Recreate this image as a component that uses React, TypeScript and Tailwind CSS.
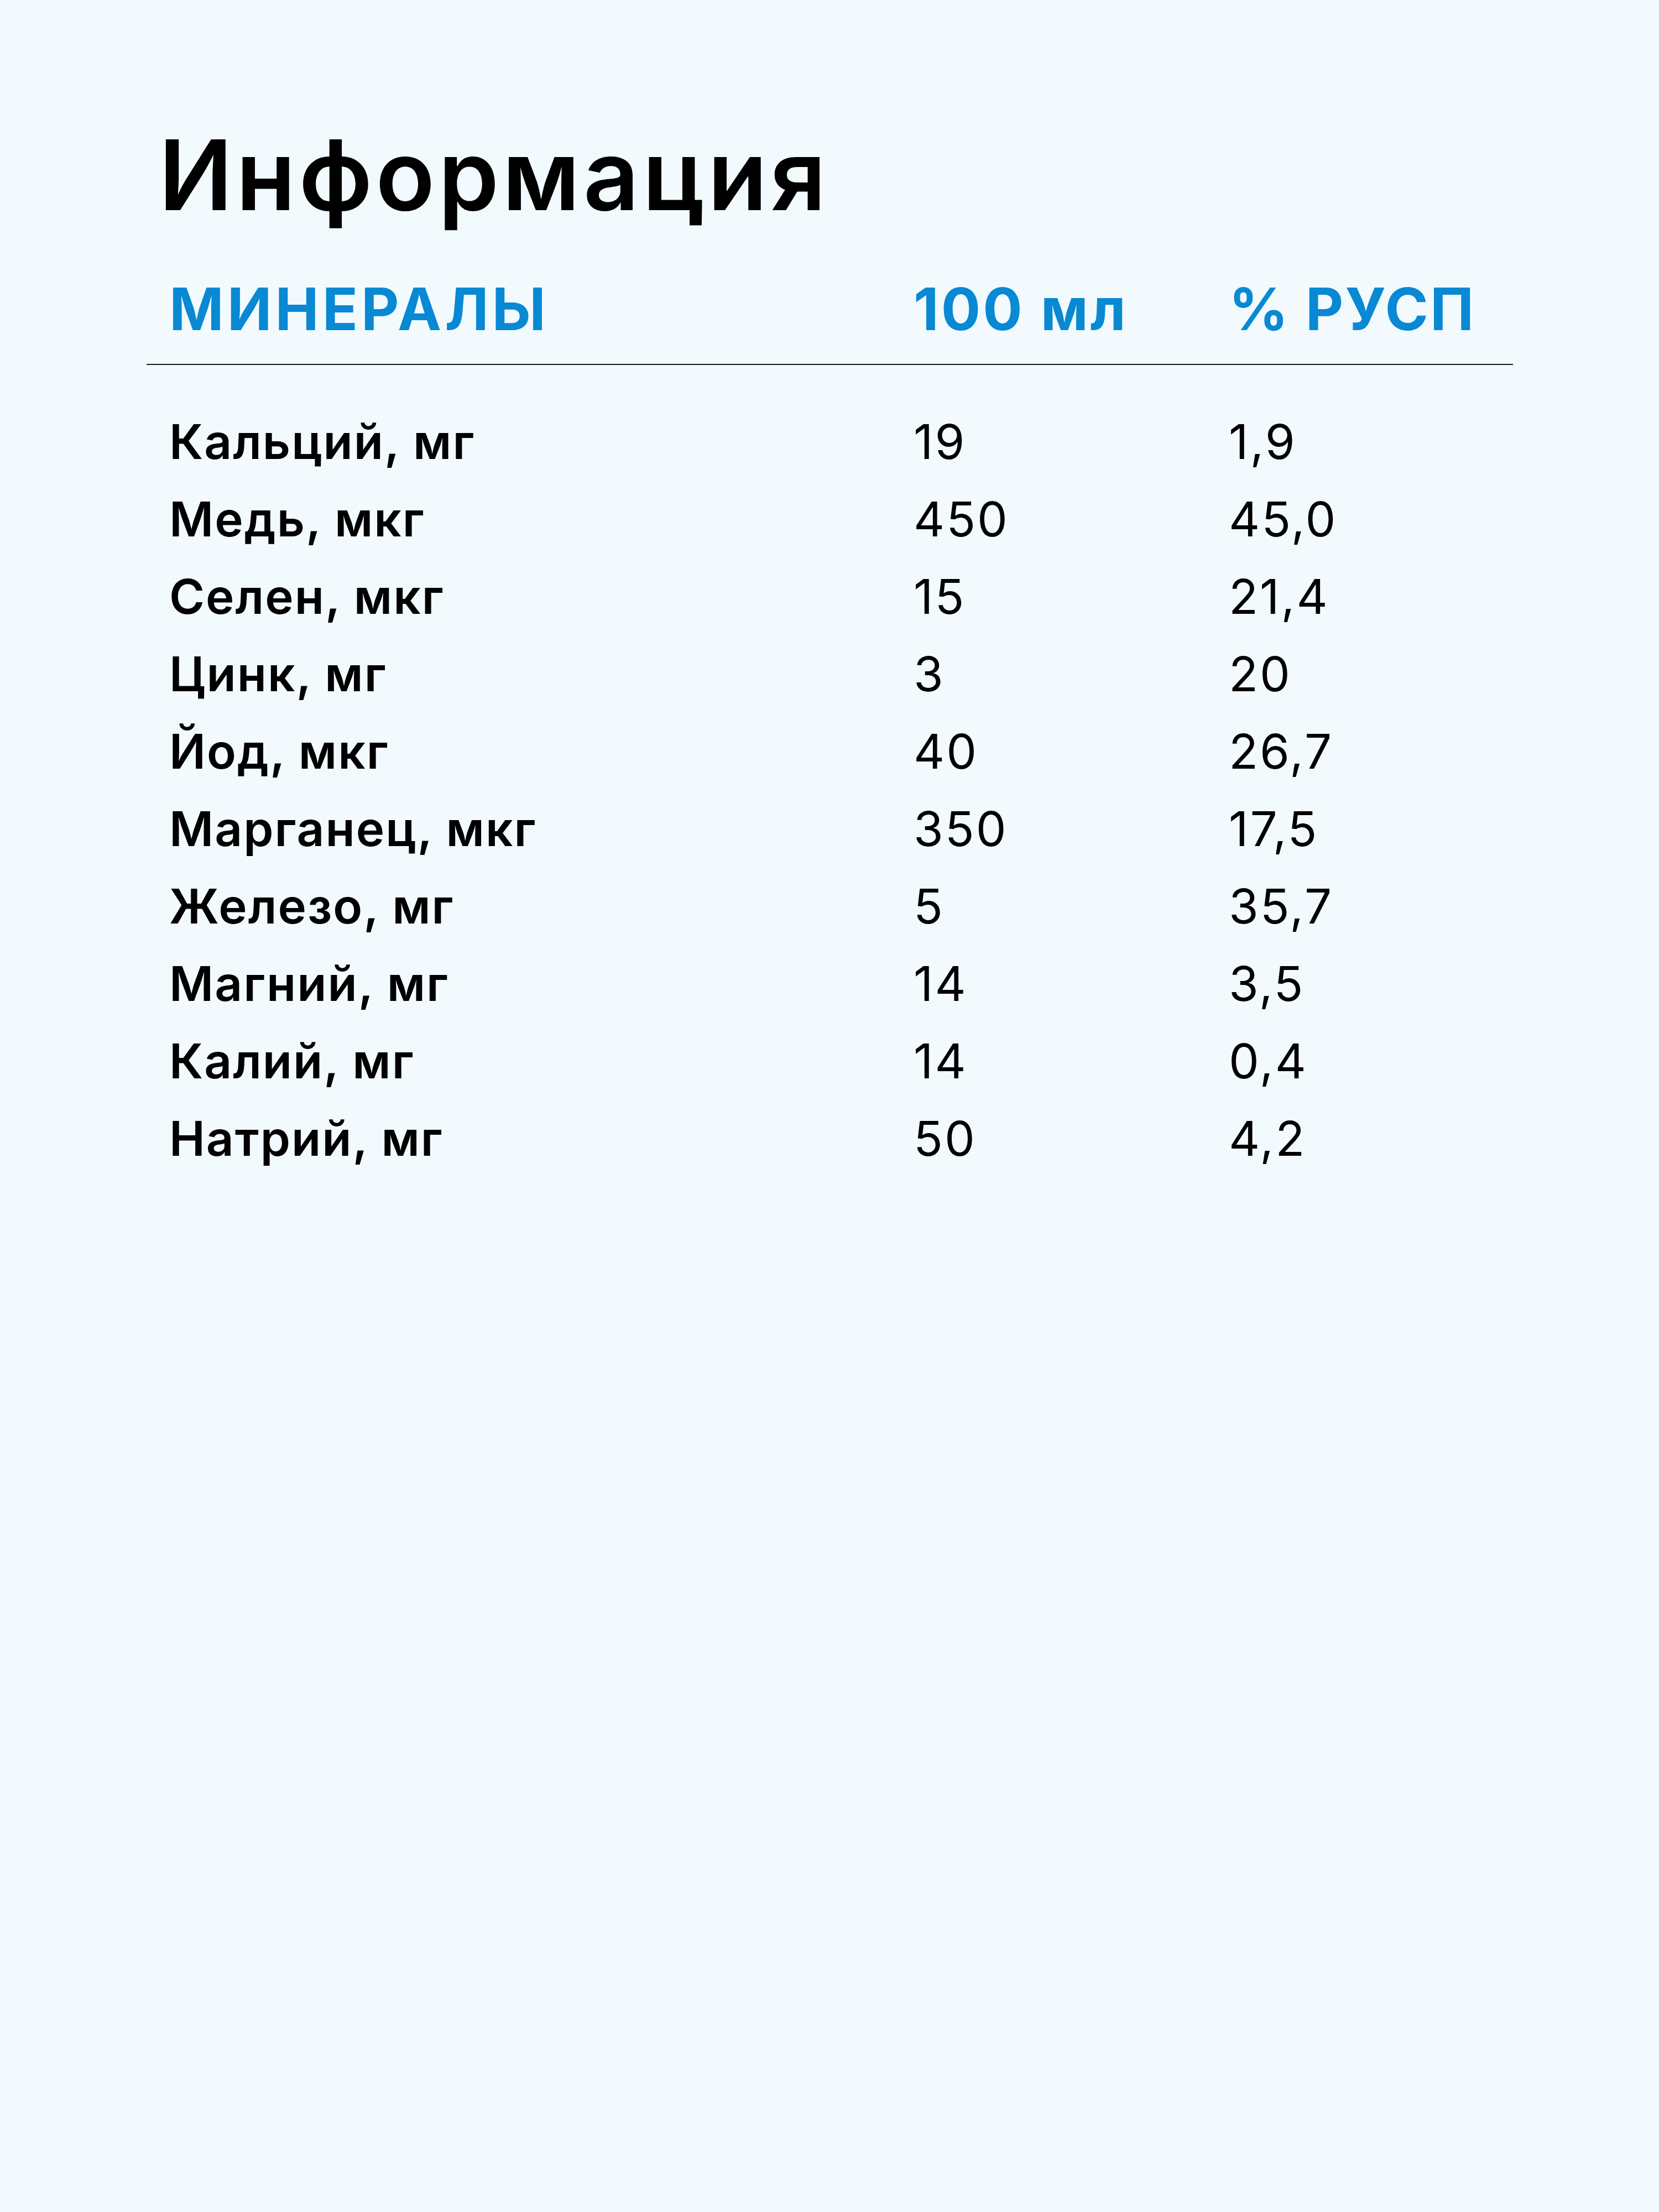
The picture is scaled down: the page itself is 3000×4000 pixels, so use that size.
import React from 'react';

/* Данные таблицы минералов */
const minerals = [
  { name: 'Кальций, мг', amount: '19', rda: '1,9' },
  { name: 'Медь, мкг', amount: '450', rda: '45,0' },
  { name: 'Селен, мкг', amount: '15', rda: '21,4' },
  { name: 'Цинк, мг', amount: '3', rda: '20' },
  { name: 'Йод, мкг', amount: '40', rda: '26,7' },
  { name: 'Марганец, мкг', amount: '350', rda: '17,5' },
  { name: 'Железо, мг', amount: '5', rda: '35,7' },
  { name: 'Магний, мг', amount: '14', rda: '3,5' },
  { name: 'Калий, мг', amount: '14', rda: '0,4' },
  { name: 'Натрий, мг', amount: '50', rda: '4,2' },
];

const App = () => (
  <div className="w-[3000px] min-h-[4000px] bg-[#f2fafe] font-['Inter',sans-serif] text-black">
    <div className="ml-[265px] w-[2471px] pt-[228px]">
      <h1 className="pl-[22px] text-[176px] leading-none font-semibold tracking-[6px]">Информация</h1>

      {/* Заголовок таблицы */}
      <div className="mt-[102px] pb-[46px] border-b-2 border-[#1a1a1a] grid grid-cols-[1346px_570px_1fr] pl-[41px] text-[106px] leading-none font-bold text-[#0989d3]">
        <div className="tracking-[6px]">МИНЕРАЛЫ</div>
        <div className="tracking-[4px]">100 мл</div>
        <div className="tracking-[3px]">% РУСП</div>
      </div>

      {/* Строки */}
      <div className="mt-[69px] pl-[41px] text-[87px] leading-[140px]">
        {minerals.map((m) => (
          <div key={m.name} className="grid grid-cols-[1346px_570px_1fr]">
            <div className="font-semibold tracking-[2px]">{m.name}</div>
            <div className="tracking-[3px]">{m.amount}</div>
            <div className="tracking-[3px]">{m.rda}</div>
          </div>
        ))}
      </div>
    </div>
  </div>
);

export default App;
